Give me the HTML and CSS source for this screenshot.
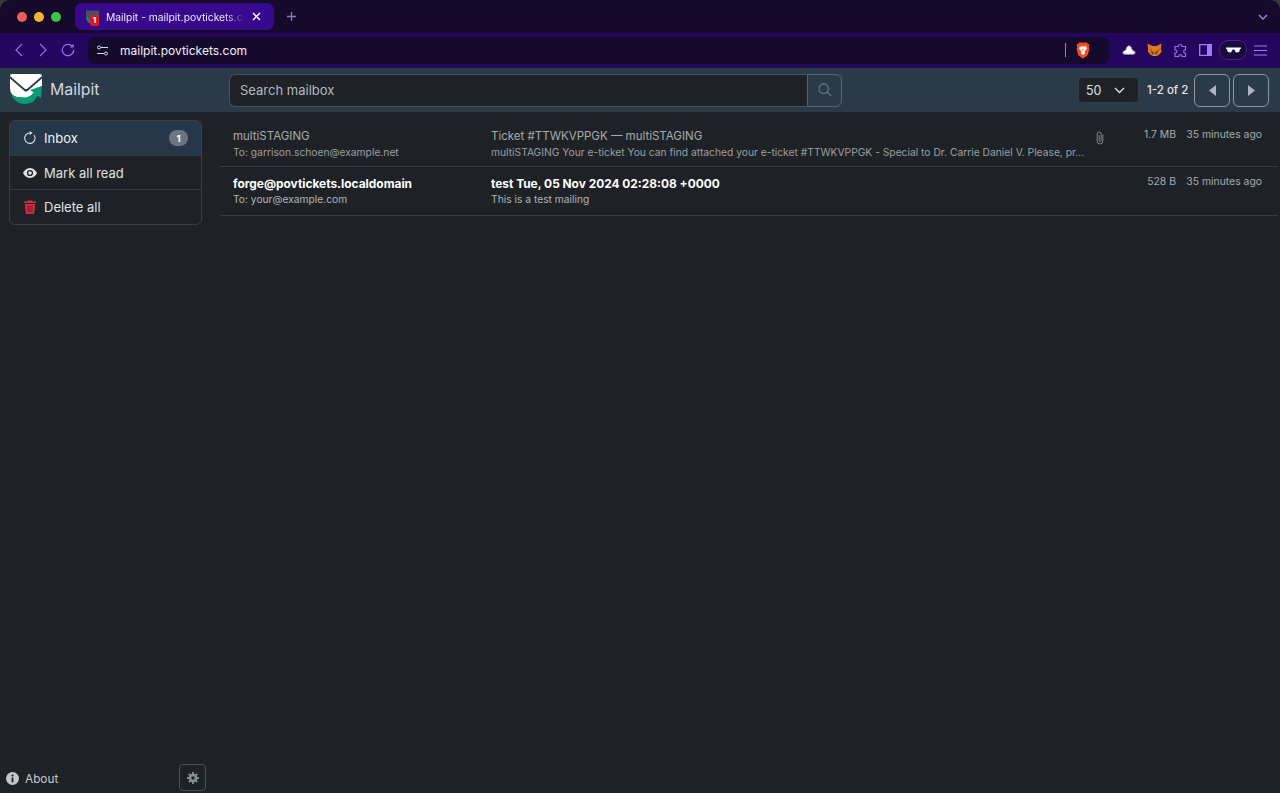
FILE: index.html
```html
<!DOCTYPE html>
<html lang="en">
<head>
<meta charset="utf-8">
<title>Mailpit</title>
<link rel="stylesheet" href="styles.css">
</head>
<body>
<div class="window">
  <div class="tabbar">
    <div class="lights"><i class="light red"></i><i class="light yellow"></i><i class="light green"></i></div>
    <div class="tab">
      <span class="favicon">
        <svg width="16" height="16" viewBox="0 0 16 16"><path d="M1 1.500h13v6L7 12 1 9z" fill="#46525f"/><path d="M1 8c0 4 3 7 6 7 2 0 4-1 5-3l-5-1z" fill="#0d8a68"/></svg>
        <b class="fav-badge">1</b>
      </span>
      <span class="tab-title">Mailpit - mailpit.povtickets.com</span>
      <svg class="tab-close" width="9" height="9" viewBox="0 0 9 9"><path d="M1 1l7 7M8 1L1 8" stroke="#fff" stroke-width="1.4"/></svg>
    </div>
    <svg class="newtab" width="11" height="11" viewBox="0 0 11 11"><path d="M5.500 1v9M1 5.500h9" stroke="#8d76c9" stroke-width="1.300"/></svg>
    <svg class="tabs-menu" width="10" height="6" viewBox="0 0 10 6"><path d="M1 1l4 4 4-4" fill="none" stroke="#a48bf0" stroke-width="1.300"/></svg>
  </div>

  <div class="toolbar">
    <svg class="nav-icon" width="9" height="14" viewBox="0 0 9 14"><path d="M8 1L2 7l6 6" fill="none" stroke="#8f6ff0" stroke-width="1.200"/></svg>
    <svg class="nav-icon fwd" width="9" height="14" viewBox="0 0 9 14"><path d="M1 1l6 6-6 6" fill="none" stroke="#8f6ff0" stroke-width="1.200"/></svg>
    <svg class="nav-icon reload" width="14" height="14" viewBox="0 0 14 14"><path d="M11.500 3.500A5.700 5.700 0 1 0 12.700 7" fill="none" stroke="#8f6ff0" stroke-width="1.300"/><path d="M8.700 4.500h4V.7z" fill="#8f6ff0"/></svg>
    <div class="urlbar">
      <svg width="13" height="11" viewBox="0 0 13 11"><g fill="none" stroke="#d8d6e0" stroke-width="1"><circle cx="3" cy="2.500" r="1.500"/><path d="M5 2.500h7M1 8.500h7"/><circle cx="10" cy="8.500" r="1.500"/></g></svg>
      <span class="url">mailpit.povtickets.com</span>
      <i class="url-sep"></i>
      <svg class="brave" width="14" height="17" viewBox="0 0 14 17"><path d="M3 .5h8l1 1.500 1.500.5-.7 3 .7 1.500-2 6.500L7 16.500 2.500 13.500.5 7l.7-1.500-.7-3L2 2z" fill="#f0501e"/><path d="M4 4.500h6l1 2-2.500 3 .5 2-2 1.500-2-1.500.5-2L3 6.500z" fill="#fff"/><path d="M5.500 7.500h3L7 9z" fill="#f0501e"/></svg>
    </div>
    <div class="extensions">
      <svg width="14" height="10" viewBox="0 0 14 10"><path d="M2.500 9.300C.5 9.300.2 6.300 2.500 5.800 3.500 5.500 3.800 5 4.300 3.500 4.900 1.700 5.800.8 7 .8s2.100.9 2.700 2.700c.5 1.500.8 2 1.800 2.300 2.300.5 2 3.500 0 3.500z" fill="#fff" stroke="#8d8d8d" stroke-width="1"/></svg>
      <svg width="15" height="14" viewBox="0 0 15 14"><path d="M.5.500l5 2.500h4l5-2.500-.6 5 .8 3-2.300 3-2.500 1.500h-4L3.200 11.500.9 8.500l.2-3z" fill="#e2761b"/><path d="M1.500 5.500l3 .5L4 9zM13.500 5.500l-3 .5.500 3z" fill="#c05f14"/><path d="M5.500 8l2 3 2-3 1.500-.5-.5 3-3 2.500-3-2.500-.5-3z" fill="#6b4425"/><path d="M6 11.500h3L7.500 13z" fill="#d7c1b3"/></svg>
      <svg width="15" height="15" viewBox="0 0 15 15"><path d="M5.500 3C5.500 1 9 1 9 3v.5h3.500V7c-2.500-.5-2.500 3.500 0 3v3.500H9c.5-2.500-3.500-2.500-3 0H2V10C4.500 10.500 4.500 6.500 2 7V3.500h3.500z" fill="none" stroke="#8f6ff0" stroke-width="1.200"/></svg>
      <svg width="13" height="12" viewBox="0 0 13 12"><path d="M.7.700h11.600v10.600H.7z" fill="none" stroke="#9d80f5" stroke-width="1.300"/><path d="M8 .7h4.300v10.600H8z" fill="#9d80f5"/></svg>
      <div class="profile"><svg width="15" height="6" viewBox="0 0 15 6"><path d="M0 .5h15v1.200l-1 .3-.8 3-3.200.5L8.300 2.500H6.700L5 5.500l-3.200-.5L1 2l-1-.3z" fill="#fff"/></svg></div>
      <svg width="13" height="11" viewBox="0 0 13 11"><path d="M0 1h13M0 5.500h13M0 10h13" stroke="#9d80f5" stroke-width="1.200"/></svg>
    </div>
  </div>

  <header class="navbar">
    <div class="brand">
      <svg width="34" height="32" viewBox="0 0 34 32">
        <path d="M1 5.500L15.500 18q1.500 1.200 3 0L33 5.500V13l-9 4 3 3q-5 5-10 5L8 24Q1 23 1 15z" fill="#fff"/>
        <path d="M3 1h28q2 0 2 2L18.500 15.500q-1.500 1-3 0L1 3q0-2 2-2z" fill="#fff"/>
        <path d="M1 14c0 10 6 17 15 17 6 0 10-3 12.500-8l3.500 2 1-12-12 4 3.500 2.500C22 23 19 24.500 15 24.500L8 24C4 23 1 20 1 14z" fill="#0a9a73"/>
      </svg>
      <span class="brand-name">Mailpit</span>
    </div>
    <form class="search">
      <input class="search-input" type="text" placeholder="Search mailbox">
      <button class="search-btn" type="button" aria-label="Search">
        <svg width="14" height="14" viewBox="0 0 16 16"><circle cx="6.500" cy="6.500" r="5.500" fill="none" stroke="#6b7b8a" stroke-width="1.200"/><path d="M10.500 10.500L15 15" stroke="#6b7b8a" stroke-width="1.200"/></svg>
      </button>
    </form>
    <div class="pager">
      <div class="select"><span>50</span><svg width="11" height="7" viewBox="0 0 11 7"><path d="M1 1l4.500 4.500L10 1" fill="none" stroke="#dee2e6" stroke-width="1.300"/></svg></div>
      <span class="count">1-2 of 2</span>
      <button class="page-btn" type="button" aria-label="Previous"><svg width="7" height="11" viewBox="0 0 7 11"><path d="M7 0v11L0 5.500z" fill="#adb5bd"/></svg></button>
      <button class="page-btn" type="button" aria-label="Next"><svg width="7" height="11" viewBox="0 0 7 11"><path d="M0 0v11l7-5.500z" fill="#adb5bd"/></svg></button>
    </div>
  </header>

  <div class="content">
    <aside class="sidebar">
      <nav class="menu">
        <a class="menu-item active">
          <svg class="menu-icon" width="14" height="14" viewBox="0 0 14 14"><path d="M7 2a5.200 5.200 0 1 0 4 2" fill="none" stroke="#dee2e6" stroke-width="1.100"/><path d="M6.700 0v4L9.500 2z" fill="#dee2e6"/></svg>
          <span class="menu-label">Inbox</span>
          <span class="badge">1</span>
        </a>
        <a class="menu-item">
          <svg class="menu-icon" width="14" height="10" viewBox="0 0 14 10"><path d="M7 0C3.500 0 1 3 0 5c1 2 3.500 5 7 5s6-3 7-5c-1-2-3.500-5-7-5z" fill="#dee2e6"/><circle cx="7" cy="5" r="3.100" fill="#1e2226"/><circle cx="7" cy="5" r="1.800" fill="#dee2e6"/></svg>
          <span class="menu-label">Mark all read</span>
        </a>
        <a class="menu-item">
          <svg class="menu-icon" width="12" height="14" viewBox="0 0 12 14"><path d="M4 .5h4l.5 1H12V3H0V1.500h3.500z" fill="#e02d3c"/><path d="M1 4h10l-.7 9c0 .5-.5 1-1 1H2.700c-.5 0-1-.5-1-1z" fill="#e02d3c"/><path d="M4 5.500v7M6 5.500v7M8 5.500v7" stroke="#1e2226" stroke-width=".8"/></svg>
          <span class="menu-label">Delete all</span>
        </a>
      </nav>
      <div class="side-foot">
        <a class="about">
          <svg width="13" height="13" viewBox="0 0 13 13"><circle cx="6.500" cy="6.500" r="6.500" fill="#c4c8cc"/><rect x="5.600" y="5.500" width="1.800" height="4.800" fill="#1e2226"/><circle cx="6.500" cy="3.600" r="1.100" fill="#1e2226"/></svg>
          <span>About</span>
        </a>
        <button class="settings" type="button" aria-label="Settings">
          <svg width="12" height="12" viewBox="0 0 12 12"><circle cx="6" cy="6" r="3" fill="none" stroke="#868e96" stroke-width="2.600"/><path d="M6 0v2.500M6 9.500V12M0 6h2.500M9.500 6H12M1.800 1.800l1.700 1.700M8.500 8.500l1.700 1.700M10.200 1.800L8.500 3.500M3.500 8.500l-1.700 1.700" stroke="#868e96" stroke-width="1.800"/></svg>
        </button>
      </div>
    </aside>

    <main class="list">
      <article class="row read">
        <div class="col-from">
          <div class="primary">multiSTAGING</div>
          <div class="secondary">To: garrison.schoen@example.net</div>
        </div>
        <div class="col-subject">
          <div class="primary">Ticket #TTWKVPPGK — multiSTAGING</div>
          <div class="secondary">multiSTAGING Your e-ticket You can find attached your e-ticket #TTWKVPPGK - Special to Dr. Carrie Daniel V. Please, pr...</div>
        </div>
        <div class="col-attach">
          <svg width="8" height="14" viewBox="0 0 8 14"><path d="M6.800 3.500v6.700a2.800 2.800 0 0 1-5.600 0V3a2 2 0 0 1 4 0v6.500a1 1 0 0 1-2 0V4" fill="none" stroke="#7d858c" stroke-width="1"/></svg>
        </div>
        <div class="col-size">1.7 MB</div>
        <div class="col-time">35 minutes ago</div>
      </article>
      <article class="row unread">
        <div class="col-from">
          <div class="primary">forge@povtickets.localdomain</div>
          <div class="secondary">To: your@example.com</div>
        </div>
        <div class="col-subject">
          <div class="primary">test Tue, 05 Nov 2024 02:28:08 +0000</div>
          <div class="secondary">This is a test mailing</div>
        </div>
        <div class="col-attach"></div>
        <div class="col-size">528 B</div>
        <div class="col-time">35 minutes ago</div>
      </article>
    </main>
  </div>
</div>
</body>
</html>
```

FILE: styles.css
```css
* { box-sizing: border-box; }
html, body { height: 100%; }
body {
  margin: 0;
  background: #3a3a3c;
  font-family: "Inter", "Liberation Sans", sans-serif;
  color: #dee2e6;
  overflow: hidden;
}
.window {
  height: 793px;
  display: flex;
  flex-direction: column;
  background: #1e2226;
  border-radius: 10px 10px 0 0;
  overflow: hidden;
}
.tabbar {
  height: 33px;
  flex: none;
  background: #150a2b;
  display: flex;
  align-items: center;
  padding-left: 17px;
}
.lights { display: flex; gap: 7px; width: 58px; flex: none; }
.light { width: 10px; height: 10px; border-radius: 50%; display: block; }
.red { background: #ed5f57; }
.yellow { background: #f4b32e; }
.green { background: #3ec449; }
.tab {
  width: 199px;
  height: 27px;
  background: #36098d;
  border-radius: 7px;
  display: flex;
  align-items: center;
  padding: 0 13px 0 10px;
  flex: none;
}
.favicon { width: 16px; height: 16px; position: relative; flex: none; }
.fav-badge {
  position: absolute;
  right: 2px;
  bottom: -1px;
  width: 9px;
  height: 11px;
  background: #d81920;
  border-radius: 2px;
  color: #fff;
  font-size: 8px;
  line-height: 11px;
  text-align: center;
}
.tab-title {
  flex: 1;
  margin-left: 5px;
  min-width: 0;
  white-space: nowrap;
  overflow: hidden;
  font-size: 10.300px;
  color: #ece8f8;
  -webkit-mask-image: linear-gradient(to right, #000 85%, transparent 100%);
  mask-image: linear-gradient(to right, #000 85%, transparent 100%);
}
.tab-close { margin-left: 7px; flex: none; }
.newtab { margin-left: 12px; flex: none; }
.tabs-menu { margin-left: auto; margin-right: 12px; flex: none; }

.toolbar {
  height: 34px;
  flex: none;
  background: #25065f;
  display: flex;
  align-items: center;
  padding-left: 14px;
}
.nav-icon { flex: none; }
.nav-icon.fwd { margin-left: 16px; }
.nav-icon.reload { margin-left: 13px; }
.urlbar {
  margin-left: 13px;
  width: 1021px;
  height: 27px;
  flex: none;
  background: #150a2b;
  border-radius: 7px;
  display: flex;
  align-items: center;
  padding: 0 19px 0 8px;
}
.url { margin-left: 11px; font-size: 12px; color: #f2f0f8; }
.url-sep { margin-left: auto; width: 1px; height: 14px; background: #8f8ba0; }
.brave { margin-left: 10px; }
.extensions {
  display: flex;
  align-items: center;
  margin-left: 13px;
  gap: 11px;
}
.profile {
  width: 28px;
  height: 20px;
  margin: 0 -4px;
  border: 1px solid #45257f;
  border-radius: 9px;
  background: #1a0a40;
  display: flex;
  align-items: center;
  justify-content: center;
}

.navbar {
  height: 45px;
  flex: none;
  background: #2b3a49;
  border-top: 1px solid #1d1040;
  display: flex;
  align-items: center;
  padding: 0 11px 0 9px;
}
.brand { width: 220px; flex: none; display: flex; align-items: center; gap: 7px; margin-top: -2px; }
.brand-name { font-size: 15.800px; color: #d3d7db; }
.search { display: flex; width: 613px; height: 33px; flex: none; }
.search-input {
  flex: 1;
  min-width: 0;
  height: 100%;
  background: #1e2226;
  border: 1px solid #44505c;
  border-right: 0;
  border-radius: 6px 0 0 6px;
  padding: 0 10px;
  font: 13px "Inter", "Liberation Sans", sans-serif;
  color: #dee2e6;
  outline: none;
}
.search-input::placeholder { color: #b4b9be; opacity: 1; }
.search-btn {
  width: 35px;
  background: transparent;
  border: 1px solid #57636f;
  border-radius: 0 6px 6px 0;
  padding: 0;
  display: flex;
  align-items: center;
  justify-content: center;
}
.pager { margin-left: auto; display: flex; align-items: center; }
.select {
  width: 61px;
  height: 26px;
  background: #1e2226;
  border: 1px solid #343b42;
  border-radius: 4px;
  display: flex;
  align-items: center;
  justify-content: space-between;
  padding: 0 13px 0 7px;
  font-size: 12.500px;
  color: #dee2e6;
}
.count { margin-left: 8px; font-size: 11.500px; font-weight: 500; color: #e4e7ea; width: 47px; white-space: nowrap; }
.page-btn {
  width: 36px;
  height: 33px;
  margin-left: 3px;
  background: transparent;
  border: 1px solid #8a96a2;
  border-radius: 6px;
  padding: 0;
  display: flex;
  align-items: center;
  justify-content: center;
}
.count + .page-btn { margin-left: 0; }

.content { flex: 1; min-height: 0; display: flex; }
.sidebar {
  width: 220px;
  flex: none;
  padding: 8px 18px 2px 9px;
  display: flex;
  flex-direction: column;
}
.menu {
  border: 1px solid #3b4046;
  border-radius: 6px;
  overflow: hidden;
  display: flex;
  flex-direction: column;
}
.menu-item {
  height: 34.200px;
  display: flex;
  align-items: center;
  padding: 0 13px;
  font-size: 13px;
  color: #dee2e6;
}
.menu-item + .menu-item { border-top: 1px solid #353a40; }
.menu-item.active { background: #26374a; color: #f0f2f4; }
.menu-icon { flex: none; width: 14px; }
.menu-label { margin-left: 7px; }
.badge {
  margin-left: auto;
  width: 19px;
  height: 16px;
  border-radius: 8px;
  background: #6c757d;
  color: #fff;
  font-size: 9.500px;
  font-weight: 700;
  display: flex;
  align-items: center;
  justify-content: center;
}
.side-foot {
  margin-top: auto;
  display: flex;
  align-items: center;
  justify-content: space-between;
  margin-left: -3px;
  margin-right: -4px;
}
.about { display: flex; align-items: center; gap: 6px; font-size: 11.800px; color: #c4c8cc; margin-top: 2px; }
.settings {
  width: 27px;
  height: 27px;
  background: transparent;
  border: 1px solid #494f55;
  border-radius: 4px;
  padding: 0;
  display: flex;
  align-items: center;
  justify-content: center;
}

.list { flex: 1; min-width: 0; padding: 8px 2px 0 0; }
.row {
  display: flex;
  padding: 0 16px 0 13px;
  border-bottom: 1px solid #373c41;
}
.row.read { height: 47px; padding-top: 8px; color: #a6abb0; }
.row.unread { height: 49px; padding-top: 9px; color: #fff; }
.col-from { width: 258px; flex: none; }
.col-subject { width: 596px; flex: none; min-width: 0; }
.primary { font-size: 11.500px; line-height: 16px; white-space: nowrap; }
.secondary { font-size: 10.280px; line-height: 14px; margin-top: 1px; color: #9a9fa4; white-space: nowrap; }
.unread .primary { font-size: 11.900px; font-weight: 700; color: #fff; }
.unread .secondary { color: #b0b5ba; margin-top: 0; }
.col-attach { width: 28px; flex: none; padding: 1px 0 0 9px; }
.col-size,
.col-time {
  font-size: 10.400px;
  line-height: 14px;
  color: #a6abb0;
  text-align: right;
  white-space: nowrap;
}
.unread .col-size,
.unread .col-time { margin-top: -1px; }
.col-size { width: 61px; flex: none; }
.col-time { flex: 1; }
```
